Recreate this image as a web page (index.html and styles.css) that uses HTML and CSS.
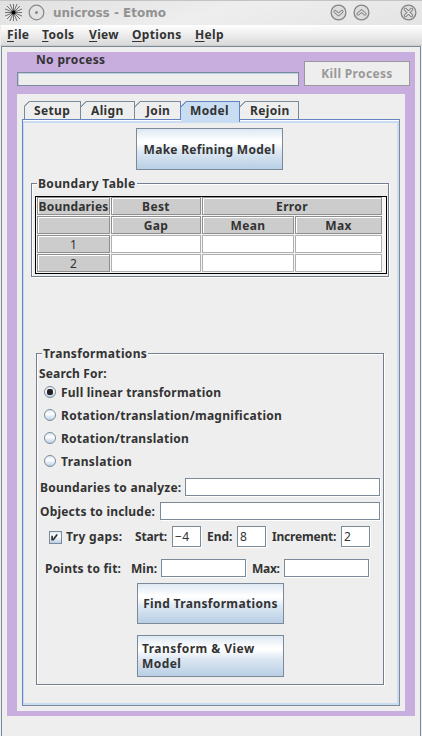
FILE: index.html
```html
<!DOCTYPE html>
<html lang="en">
<head>
<meta charset="utf-8">
<title>unicross - Etomo</title>
<link rel="stylesheet" href="styles.css">
</head>
<body>
<header class="titlebar">
  <svg class="burst" width="17" height="17" viewBox="0 0 17 17"><path d="M8.5 0V17M0 8.5H17M2 2L15 15M15 2L2 15M5 0L12 17M12 0L5 17M0 5L17 12M0 12L17 5" stroke="#333" stroke-width=".65"/><circle cx="8.5" cy="8.5" r="2" fill="#000"/></svg>
  <svg class="dot" width="17" height="17" viewBox="0 0 17 17"><circle cx="8.5" cy="8.5" r="7.3" fill="#e4e4e4" stroke="#8b8b8b" stroke-width="1.3"/><circle cx="8.5" cy="8.5" r="1.5" fill="#888"/></svg>
  <span class="title">unicross - Etomo</span>
  <svg class="wbtn" width="17" height="17" viewBox="0 0 17 17"><circle cx="8.5" cy="8.5" r="7.4" fill="#ddd" stroke="#858585" stroke-width="1.3"/><path d="M5 7.5l3.5 3 3.5-3" fill="none" stroke="#858585" stroke-width="3.2" stroke-linecap="round"/><path d="M5 7.5l3.5 3 3.5-3" fill="none" stroke="#e8e8e8" stroke-width="1.2" stroke-linecap="round"/></svg>
  <svg class="wbtn up" width="17" height="17" viewBox="0 0 17 17"><circle cx="8.5" cy="8.5" r="7.4" fill="#ddd" stroke="#858585" stroke-width="1.3"/><path d="M5 10l3.5-3 3.5 3" fill="none" stroke="#858585" stroke-width="3.2" stroke-linecap="round"/><path d="M5 10l3.5-3 3.5 3" fill="none" stroke="#e8e8e8" stroke-width="1.2" stroke-linecap="round"/></svg>
  <svg class="wbtn close" width="17" height="17" viewBox="0 0 17 17"><circle cx="8.5" cy="8.5" r="7.4" fill="#ddd" stroke="#858585" stroke-width="1.3"/><path d="M5.5 5.5l6 6M11.5 5.5l-6 6" stroke="#858585" stroke-width="3.2" stroke-linecap="round"/><path d="M5.5 5.5l6 6M11.5 5.5l-6 6" stroke="#e8e8e8" stroke-width="1.2" stroke-linecap="round"/></svg>
</header>
<nav class="menu">
  <span class="m-file"><u>F</u>ile</span><span class="m-tools"><u>T</u>ools</span><span class="m-view"><u>V</u>iew</span><span class="m-options"><u>O</u>ptions</span><span class="m-help"><u>H</u>elp</span>
</nav>
<main class="frame">
  <div class="purple">
    <div class="process">
      <div class="progress"><span class="status">No process</span><div class="bar"></div></div>
      <div class="kill"><span>Kill Process</span></div>
    </div>
    <div class="inner">
      <div class="tabs">
        <div class="tab t-setup"><span>Setup</span></div>
        <div class="tab t-align"><span>Align</span></div>
        <div class="tab t-join"><span>Join</span></div>
        <div class="tab t-model on"><span>Model</span></div>
        <div class="tab t-rejoin"><span>Rejoin</span></div>
      </div>
      <div class="pane">
        <div class="btn make"><span>Make Refining Model</span></div>
        <section class="group boundary">
          <h2 class="legend">Boundary Table</h2>
          <div class="table">
            <div class="th tight">Boundaries</div><div class="th">Best</div><div class="th wide">Error</div>
            <div class="th"></div><div class="th">Gap</div><div class="th">Mean</div><div class="th">Max</div>
            <div class="th num">1</div><div class="td"></div><div class="td"></div><div class="td"></div>
            <div class="th num">2</div><div class="td"></div><div class="td"></div><div class="td"></div>
          </div>
        </section>
        <section class="group trans">
          <h2 class="legend">Transformations</h2>
          <div class="search">Search For:</div>
          <div class="radio"><i class="circle sel"></i><span class="s-full">Full linear transformation</span></div>
          <div class="radio"><i class="circle"></i><span class="s-rtm">Rotation/translation/magnification</span></div>
          <div class="radio"><i class="circle"></i><span class="s-rt">Rotation/translation</span></div>
          <div class="radio"><i class="circle"></i><span>Translation</span></div>
          <div class="row r1"><label class="l-bound">Boundaries to analyze:</label><div class="field"></div></div>
          <div class="row r2"><label class="l-obj">Objects to include:</label><div class="field"></div></div>
          <div class="row r3">
            <svg class="check" width="13" height="13" viewBox="0 0 13 13"><path d="M2.5 4.500v4.500h1.500l4.500-6" fill="none" stroke="#333" stroke-width="2"/></svg>
            <label class="l-try">Try gaps:</label>
            <label class="l-start">Start:</label><div class="field small">−4</div>
            <label class="l-end">End:</label><div class="field small">8</div>
            <label class="l-inc">Increment:</label><div class="field small">2</div>
          </div>
          <div class="row r4">
            <label class="l-pts">Points to fit:</label>
            <label class="l-min">Min:</label><div class="field mid"></div>
            <label class="l-max">Max:</label><div class="field mid"></div>
          </div>
          <div class="btn find"><span>Find Transformations</span></div>
          <div class="btn view"><span>Transform &amp; View<br>Model</span></div>
        </section>
      </div>
    </div>
  </div>
</main>
</body>
</html>
```
FILE: styles.css
```css
* { box-sizing: border-box; }
body { margin: 0; width: 422px; height: 736px; overflow: hidden; background: #eee; color: #333; font: bold 12px/16px "Noto Sans", sans-serif; letter-spacing: .35px; white-space: nowrap; }
i { display: block; }
svg { display: block; flex: none; }
.titlebar { height: 25px; display: flex; padding: 3px 0 0 5px; border-top: 1px solid #c4c4c4; background: linear-gradient(165deg, #e0e0e0, #eee 50%, #e4e4e4); }
.dot { margin-left: 6px; }
.title { flex: 1; padding-left: 8px; font: bold 12px/18px "DejaVu Sans", sans-serif; letter-spacing: 0; color: #929292; }
.up { margin-left: 6px; }
.close { margin: 0 5px 0 30px; }
.menu { height: 21px; display: flex; padding: 2px 0 0 6px; background: linear-gradient(#fff, #dadada); border-left: 1px solid #eee; border-bottom: 1px solid #ccc; }
.menu span { flex: none; }
.menu u { text-decoration-thickness: 1px; text-underline-offset: 2px; }
.m-file { width: 35px; }
.m-tools { width: 47px; }
.m-view { width: 43px; }
.m-options { width: 63px; }
.frame { margin-left: 1px; width: 420px; height: 690px; border: 1px solid #7a8a99; border-bottom: 0; padding: 5px; background: #eee; }
.purple { width: 408px; height: 664px; padding: 0 10px 5px; background: #c8addf; }
.process { height: 42px; display: flex; margin-right: -5px; }
.progress { width: 282px; }
.status { display: block; height: 20px; padding-left: 19px; line-height: 16px; }
.bar { height: 14px; border: 1px solid #7a8a99; box-shadow: inset 1px 1px #b8cfe5; background: #eee; }
.kill { width: 106px; height: 25px; margin: 9px 0 0 5px; border: 1px solid #999; background: #eee; color: #999; text-align: center; line-height: 24px; }
.inner { width: 388px; height: 617px; padding: 7px 5px 5px; background: #eee; }
.tabs { height: 18px; display: flex; padding-left: 2px; }
.tab { --edge: #7a8a99; --face: #eee; height: 18px; padding-left: 11px; line-height: 18px; border-top: 1px solid var(--edge); border-right: 1px solid var(--edge); background: linear-gradient(135deg, var(--edge) 4.4px, var(--face) 4.6px) border-box; clip-path: polygon(5px 0, 100% 0, 100% 100%, 0 100%, 0 5px); }
.t-setup { width: 57px; border-left: 1px solid #7a8a99; padding-left: 9px; }
.t-align { width: 54px; padding-left: 10px; }
.t-join { width: 46px; border-right-color: #6382bf; }
.t-model { width: 59px; padding-left: 9px; }
.t-rejoin { width: 59px; padding-left: 10px; }
.tab.on { --edge: #6382bf; --face: #c8ddf2; height: 21px; position: relative; }
.pane { width: 378px; height: 587px; border: 1px solid #7a8a99; border-left-color: #6382bf; border-top-color: #6382bf; box-shadow: inset 0 1px #fff, inset 1px 0 #c8ddf2, inset -2px -2px #c8ddf2, inset 0 3px #c8ddf2; padding: 8px 0 0 8px; }
.btn { border: 1px solid #7a8a99; background: linear-gradient(#dde8f3, #fff 30%, #fff 34%, #dce7f2 58%, #b8cfe5); display: flex; align-items: center; justify-content: center; }
.make { width: 147px; height: 42px; margin-left: 105px; padding-top: 2px; letter-spacing: .28px; }
.group { border: 1px solid #757d91; box-shadow: 1px 1px #fff, inset 1px 1px #fff; }
.legend { margin: -9px 0 0; font: inherit; width: fit-content; height: 16px; line-height: 18px; background: #eee; padding: 0 1px; }
.boundary { width: 358px; height: 94px; margin-top: 13px; padding: 0 0 0 3px; }
.boundary .legend { margin-left: 2px; }
.table { margin-top: 5px; width: 352px; height: 78px; border: 1px solid #000; padding: 0 3px 0 1px; display: grid; grid-template: repeat(4, 18px) / 73px 90px 92px 87px; gap: 1px; background: #f5f5f5; }
.th { background: #ccc; border: 1px solid #8e8e8e; box-shadow: inset 1px 1px #fff; text-align: center; line-height: 18px; overflow: hidden; }
.tight { letter-spacing: .2px; }
.wide { grid-column: span 2; }
.td { background: #fff; border: 1px solid #b0b0b0; }
.num { font-weight: normal; }
.trans { width: 348px; height: 332px; margin: 76px 0 0 5px; padding-left: 2px; }
.trans .legend { margin-left: 3px; }
.search { height: 20px; padding-top: 5px; letter-spacing: .15px; }
.radio { height: 23px; display: flex; padding-left: 5px; align-items: center; }
.circle { width: 12px; height: 12px; border: 1px solid #7a8a99; border-radius: 50%; margin: 0 5px 1px 0; background: linear-gradient(#dde8f3, #fff 40%, #b8cfe5); display: flex; align-items: center; justify-content: center; }
.sel::after { content: ""; width: 6px; height: 6px; border-radius: 2px; background: #222; }
.s-full { letter-spacing: .23px; }
.s-rtm { letter-spacing: .28px; }
.s-rt { letter-spacing: .25px; }
.row { display: flex; align-items: center; height: 18px; }
.row label { flex: none; line-height: 18px; }
.field { height: 18px; background: #fff; border: 1px solid #7a8a99; box-shadow: 1px 1px #fff; }
.r1 { margin: 5px 0 0 1px; }
.r1 label, .r2 label, .r4 label { padding-top: 2px; }
.l-bound { width: 145px; letter-spacing: .25px; }
.r1 .field { width: 195px; }
.r2 { margin: 6px 0 0 1px; }
.l-obj { width: 120px; letter-spacing: .2px; }
.r2 .field { width: 220px; }
.r3 { height: 21px; margin: 6px 0 0 10px; }
.check { border: 1px solid #7a8a99; background: linear-gradient(#dde8f3, #fff 40%, #b8cfe5); margin: 2px 4px 0 0; }
.l-try { width: 69px; padding-top: 1px; }
.l-start { width: 37px; letter-spacing: -.15px; }
.small { width: 29px; height: 21px; padding-left: 2px; font-weight: normal; line-height: 19px; margin-right: 6px; }
.l-end { width: 30px; letter-spacing: 0; }
.l-inc { width: 69px; letter-spacing: -.2px; }
.r4 { margin: 12px 0 0 6px; }
.l-pts { width: 86px; letter-spacing: .2px; }
.l-min { width: 30px; letter-spacing: 0; }
.mid { width: 85px; margin-right: 6px; }
.l-max { width: 32px; letter-spacing: -.3px; }
.find { width: 147px; height: 41px; margin: 6px 0 0 98px; padding-top: 1px; }
.view { width: 147px; height: 42px; margin: 11px 0 0 98px; justify-content: flex-start; padding-left: 4px; line-height: 15px; letter-spacing: .45px; }
```
